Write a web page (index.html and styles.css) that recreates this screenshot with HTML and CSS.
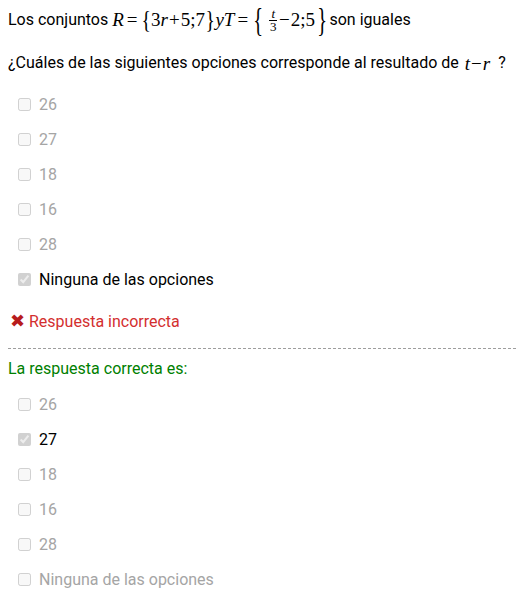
FILE: index.html
```html
<!DOCTYPE html>
<html lang="es">
<head>
<meta charset="utf-8">
<link rel="stylesheet" href="styles.css">
</head>
<body>
<div class="quiz">
  <p class="stmt">Los conjuntos&nbsp;<span class="math"><i>R</i><span class="rel">=</span><span class="br">{</span>3<i>r</i><span class="op">+</span>5;7<span class="br">}</span><i>y</i><i>T</i><span class="rel">=</span><span class="br big">{</span><span class="frac"><span class="num"><i>t</i></span><span class="den">3</span></span><span class="op">−</span>2;5<span class="br big">}</span></span>son iguales</p>
  <p class="question">¿Cuáles de las siguientes opciones corresponde al resultado de <span class="math"><i>t</i><span class="op">−</span><i>r</i></span> ?</p>

  <ul class="options first">
    <li class="opt"><input type="checkbox" disabled><span class="lbl">26</span></li>
    <li class="opt"><input type="checkbox" disabled><span class="lbl">27</span></li>
    <li class="opt"><input type="checkbox" disabled><span class="lbl">18</span></li>
    <li class="opt"><input type="checkbox" disabled><span class="lbl">16</span></li>
    <li class="opt"><input type="checkbox" disabled><span class="lbl">28</span></li>
    <li class="opt sel"><input type="checkbox" disabled checked><span class="lbl">Ninguna de las opciones</span></li>
  </ul>

  <div class="wrong"><span class="x">✖</span>Respuesta incorrecta</div>

  <div class="sep"></div>

  <div class="right">La respuesta correcta es:</div>

  <ul class="options second">
    <li class="opt"><input type="checkbox" disabled><span class="lbl">26</span></li>
    <li class="opt sel"><input type="checkbox" disabled checked><span class="lbl">27</span></li>
    <li class="opt"><input type="checkbox" disabled><span class="lbl">18</span></li>
    <li class="opt"><input type="checkbox" disabled><span class="lbl">16</span></li>
    <li class="opt"><input type="checkbox" disabled><span class="lbl">28</span></li>
    <li class="opt"><input type="checkbox" disabled><span class="lbl">Ninguna de las opciones</span></li>
  </ul>
</div>
</body>
</html>
```
FILE: styles.css
```css
html, body {
  background: #fff;
}
html {
  overflow: hidden;
}
body {
  margin: 8px 0 0 8px;
  font-family: Roboto, "Noto Sans", sans-serif;
  font-size: 16px;
  color: #000;
}
.quiz {
  display: flex;
  flex-direction: column;
}
.stmt {
  margin: 0;
  height: 24px;
  line-height: 22px;
  display: flex;
  align-items: center;
  white-space: nowrap;
}
.question {
  margin: 20px 0 0 0;
  line-height: 22px;
  height: 22px;
  white-space: nowrap;
}
.math {
  font-family: "Liberation Serif", "DejaVu Serif", serif;
  font-size: 19px;
  display: inline-flex;
  align-items: center;
}
.math i {
  font-style: italic;
}
.rel {
  margin: 0 3px;
}
.op {
  margin: 0 1px;
}
.br {
  font-style: normal;
  font-size: 26px;
  display: inline-block;
  line-height: 20px;
  transform: scaleX(0.75);
  margin: 0 -1px;
}
.br.big {
  font-size: 34px;
  transform: scaleX(0.6);
  line-height: 24px;
  margin: 0 -1px 0 -1px;
}
.frac {
  display: inline-flex;
  flex-direction: column;
  align-items: center;
  font-size: 13px;
  line-height: 12px;
  margin: 0 1px 0 4px;
}
.frac .num {
  border-bottom: 1px solid #000;
  padding: 0 2px;
}
.question .math {
  margin: 0 4px 0 2px;
  vertical-align: -2px;
}
.options {
  list-style: none;
  margin: 0;
  padding: 0;
}
.options.first {
  margin-top: 13px;
}
.opt {
  height: 35px;
  display: flex;
  align-items: center;
  padding-left: 6px;
  color: #a5a5a5;
}
.opt input {
  margin: 0 8px 0 4px;
  width: 13px;
  height: 13px;
}
.opt.sel {
  color: #000;
}
.wrong {
  margin-top: 13px;
  height: 22px;
  display: flex;
  align-items: center;
  color: #d32f2f;
}
.x {
  color: #b71c1c;
  font-size: 18px;
  line-height: 22px;
  margin: 0 4px 0 2px;
}
.sep {
  margin-top: 16px;
  height: 1px;
  background: repeating-linear-gradient(to right, #9e9e9e 0 3px, transparent 3px 5px);
}
.right {
  margin-top: 9px;
  height: 22px;
  line-height: 22px;
  color: #008000;
}
.options.second {
  margin-top: 7px;
}
```
